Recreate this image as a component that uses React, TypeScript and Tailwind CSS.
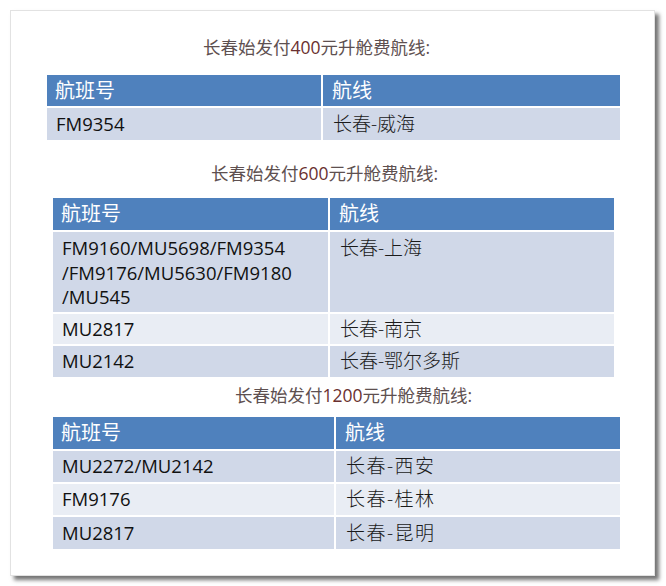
import React from "react";

const FONT = "font-['Open_Sans','Noto_Sans_CJK_SC',sans-serif]";

type Row = { a: React.ReactNode; b: string; h: string; top?: boolean };

function Title({ pre, num, ml, mt }: { pre: string; num: string; ml: string; mt: string }) {
  return (
    <div className={`${ml} ${mt} h-[24px] leading-[24px] text-[17.5px] text-[#5e5050] whitespace-nowrap`}>
      {pre}
      <span className="text-[#6a3030]">{num}</span>元升舱费航线:
    </div>
  );
}

function Table({
  ml,
  w,
  cols,
  mt,
  headerH,
  rows,
  thin,
}: {
  ml: string;
  w: string;
  cols: string;
  mt: string;
  headerH: string;
  rows: Row[];
  thin?: boolean;
}) {
  return (
    <div className={`${ml} ${mt} ${w} grid ${cols} gap-[2px] bg-white`}>
      <div className={`${headerH} bg-[#4f81bd] text-white text-[20px] flex items-center pl-[8px]`}>航班号</div>
      <div className={`${headerH} bg-[#4f81bd] text-white text-[20px] flex items-center pl-[9px]`}>航线</div>
      {rows.map((r, i) => {
        const bg = i % 2 === 0 ? "bg-[#d0d8e8]" : "bg-[#e9edf4]";
        const align = r.top ? "items-start pt-[4px]" : "items-center";
        return (
          <React.Fragment key={i}>
            <div className={`${r.h} ${bg} flex ${align} pl-[9px] text-[18.5px] leading-[24.5px] text-[#111]`}>
              <div>{r.a}</div>
            </div>
            <div
              className={`${r.h} ${bg} flex ${align} pl-[10px] text-[19px] leading-[24.5px] text-[#1a1a1a] font-light ${
                thin ? "tracking-[1.5px]" : ""
              }`}
            >
              {r.b}
            </div>
          </React.Fragment>
        );
      })}
    </div>
  );
}

export default function App() {
  return (
    <div className={`w-[666px] h-[586px] bg-white ${FONT}`}>
      <div className="ml-[10px] pt-[10px]">
        <div className="w-[645px] h-[566px] bg-white border border-[#e2e2e2] shadow-[4px_4px_4px_rgba(0,0,0,0.55)] flex flex-col">
          <Title pre="长春始发付" num="400" ml="ml-[192px]" mt="mt-[24px]" />
          <Table
            ml="ml-[36px]"
            w="w-[573px]"
            cols="grid-cols-[274px_1fr]"
            mt="mt-[16px]"
            headerH="h-[31px]"
            rows={[{ a: "FM9354", b: "长春-威海", h: "h-[32px]" }]}
          />
          <Title pre="长春始发付" num="600" ml="ml-[200px]" mt="mt-[21px]" />
          <Table
            ml="ml-[42px]"
            w="w-[561px]"
            cols="grid-cols-[275px_1fr]"
            mt="mt-[13px]"
            headerH="h-[32px]"
            rows={[
              {
                a: (
                  <>
                    FM9160/MU5698/FM9354
                    <br />
                    /FM9176/MU5630/FM9180
                    <br />
                    /MU545
                  </>
                ),
                b: "长春-上海",
                h: "h-[80px]",
                top: true,
              },
              { a: "MU2817", b: "长春-南京", h: "h-[30px]" },
              { a: "MU2142", b: "长春-鄂尔多斯", h: "h-[31px]" },
            ]}
          />
          <Title pre="长春始发付" num="1200" ml="ml-[224px]" mt="mt-[6px]" />
          <Table
            ml="ml-[42px]"
            w="w-[567px]"
            cols="grid-cols-[281px_1fr]"
            mt="mt-[10px]"
            headerH="h-[32px]"
            thin
            rows={[
              { a: "MU2272/MU2142", b: "长春-西安", h: "h-[31px]" },
              { a: "FM9176", b: "长春-桂林", h: "h-[31px]" },
              { a: "MU2817", b: "长春-昆明", h: "h-[32px]" },
            ]}
          />
        </div>
      </div>
    </div>
  );
}
